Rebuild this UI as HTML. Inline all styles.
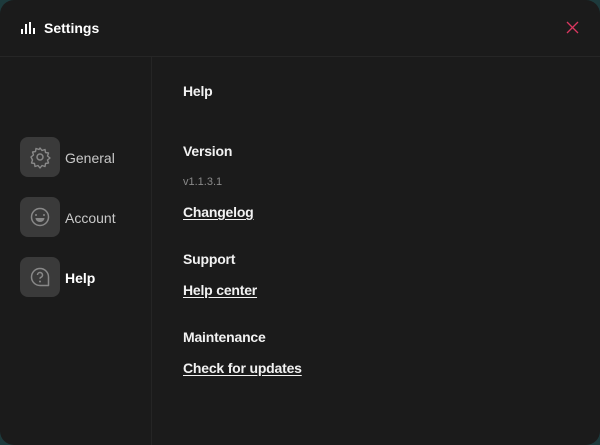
<!DOCTYPE html>
<html><head><style>
html,body{margin:0;padding:0;width:600px;height:445px;overflow:hidden;background:#1d3a3c;}
.win{position:absolute;left:0;top:0;width:600px;height:445px;background:#1b1b1b;border-radius:14px;font-family:"Liberation Sans",sans-serif;color:#fff;}
.hdr{position:absolute;left:0;top:0;width:600px;height:56px;border-bottom:1px solid #262626;}
.title{position:absolute;left:44px;top:20px;font-size:14px;font-weight:bold;}
.side{position:absolute;left:151px;top:57px;width:1px;height:388px;background:#252525;}
.item{position:absolute;left:20px;width:40px;height:40px;border-radius:8px;background:#3a3a3a;}
.lbl{position:absolute;left:65px;font-size:14px;color:#c8c8c8;}
.h{position:absolute;left:183px;font-size:14px;font-weight:bold;color:#f2f2f2;letter-spacing:-0.2px;}
.lnk{position:absolute;left:183px;font-size:14px;font-weight:bold;color:#f2f2f2;text-decoration:underline;text-underline-offset:2px;letter-spacing:-0.2px;}
</style></head><body>
<div class="win">
<div class="hdr">
<svg style="position:absolute;left:21px;top:22px" width="16" height="12"><rect x="0" y="7" width="2" height="5" fill="#fff"/><rect x="4" y="2" width="2" height="10" fill="#fff"/><rect x="8" y="0" width="2" height="12" fill="#fff"/><rect x="12" y="6" width="2" height="6" fill="#fff"/></svg>
<div class="title">Settings</div>
<svg style="position:absolute;left:566px;top:21px" width="13" height="13"><path d="M1 1L12 12M12 1L1 12" stroke="#d9375f" stroke-width="1.3"/></svg>
</div>
<div class="side"></div>
<div class="item" style="top:137px"><svg width="40" height="40"><circle cx="20" cy="20" r="3" fill="none" stroke="#888" stroke-width="1.5"/><path d="M20 11l2 2.5 3-1 .5 3 3 .5-1 3 2.5 2-2.5 2 1 3-3 .5-.5 3-3-1-2 2.5-2-2.5-3 1-.5-3-3-.5 1-3L11 20l2.5-2-1-3 3-.5.5-3 3 1z" fill="none" stroke="#888" stroke-width="1.4" stroke-linejoin="round"/></svg></div>
<div class="lbl" style="top:150px">General</div>
<div class="item" style="top:197px"><svg width="40" height="40"><circle cx="20" cy="20" r="8.5" fill="none" stroke="#888" stroke-width="1.5"/><path d="M16 18v0M24 18v0" stroke="#888" stroke-width="2" stroke-linecap="round"/><path d="M15.5 21h9a4.5 4 0 0 1-9 0z" fill="#888"/></svg></div>
<div class="lbl" style="top:210px">Account</div>
<div class="item" style="top:257px"><svg width="40" height="40"><path d="M28.5 28.5V20a8.5 8.5 0 1 0-8.5 8.5z" fill="none" stroke="#888" stroke-width="1.5" stroke-linejoin="round"/><path d="M17.5 18a2.5 2.5 0 1 1 3.5 2.3c-.7.3-1 .8-1 1.5" fill="none" stroke="#888" stroke-width="1.5"/><circle cx="20" cy="24.5" r="1" fill="#888"/></svg></div>
<div class="lbl" style="top:270px;color:#fff;font-weight:bold">Help</div>
<div class="h" style="top:83px">Help</div>
<div class="h" style="top:143px">Version</div>
<div style="position:absolute;left:183px;top:176px;font-size:11px;color:#8a8a8a">v1.1.3.1</div>
<div class="lnk" style="top:204px">Changelog</div>
<div class="h" style="top:251px">Support</div>
<div class="lnk" style="top:282px">Help center</div>
<div class="h" style="top:329px">Maintenance</div>
<div class="lnk" style="top:360px">Check for updates</div>
</div>
</body></html>
